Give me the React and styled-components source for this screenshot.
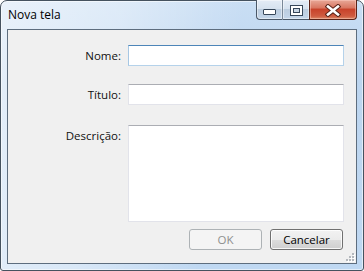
import React from 'react'
import styled, { createGlobalStyle, css } from 'styled-components'

const GlobalStyle = createGlobalStyle`
  html, body {
    margin: 0;
    padding: 0;
    background: #ffffff;
  }
  * {
    box-sizing: border-box;
  }
`

const Window = styled.div`
  width: 364px;
  height: 271px;
  display: flex;
  flex-direction: column;
  padding: 0 6px 6px;
  border: 1px solid #45525f;
  border-radius: 7px 7px 3px 3px;
  background:
    linear-gradient(100deg, rgba(255, 255, 255, 0.6) 0%, rgba(255, 255, 255, 0.4) 30%, rgba(255, 255, 255, 0) 60%),
    linear-gradient(180deg, #c9def4 0%, #bcd5ef 30%, #bfd8f2 100%);
  box-shadow: inset 0 0 0 1px rgba(255, 255, 255, 0.55);
  font-family: 'Open Sans', 'Noto Sans', sans-serif;
  font-size: 11.5px;
  color: #000;
`

const TitleBar = styled.div`
  height: 28px;
  display: flex;
  justify-content: space-between;
  align-items: flex-start;
`

const Title = styled.span`
  padding: 6px 0 0 1px;
  line-height: 16px;
  font-size: 12px;
`

const CaptionGroup = styled.div`
  display: flex;
  margin-top: -1px;
`

const CaptionButton = styled.div`
  width: ${(p) => p.$w}px;
  height: 20px;
  display: flex;
  align-items: center;
  justify-content: center;
  padding-top: 1px;
  border: 1px solid #4a5868;
  border-top: none;
  background: linear-gradient(180deg, #e4ecf6 0%, #d6e2ef 45%, #bccddf 50%, #c4d6ea 100%);
  box-shadow: inset 0 0 0 1px rgba(255, 255, 255, 0.45);
  ${(p) =>
    p.$pos === 'first' &&
    css`
      border-bottom-left-radius: 4px;
      border-right: 1px solid #7a8898;
    `}
  ${(p) =>
    p.$pos === 'middle' &&
    css`
      border-left: none;
      border-right: none;
    `}
  ${(p) =>
    p.$close &&
    css`
      border-color: #5a2318;
      border-bottom-right-radius: 4px;
      background: linear-gradient(180deg, #e8a898 0%, #d97863 40%, #c8432b 50%, #cf5b40 85%, #dc8c6a 100%);
      box-shadow: inset 0 0 0 1px rgba(255, 210, 200, 0.45);
    `}
`

const ClientArea = styled.div`
  position: relative;
  flex: 1;
  display: flex;
  flex-direction: column;
  padding: 15px 12px 0 0;
  border: 1px solid #5d6d7e;
  background: #f0f0f0;
`

const Form = styled.div`
  display: grid;
  grid-template-columns: 113px 216px;
  column-gap: 7px;
  align-items: center;
`

const Label = styled.label`
  justify-self: end;
  align-self: ${(p) => (p.$top ? 'start' : 'center')};
  padding-top: ${(p) => (p.$top ? '3px' : '0')};
  line-height: 16px;
  color: #111;
`

const Spacer = styled.div`
  grid-column: 1 / span 2;
  height: ${(p) => p.$h}px;
`

const TextInput = styled.div`
  height: 21px;
  background: #fff;
  border: 1px solid #e2e3ea;
  border-top-color: #abadb3;
  ${(p) =>
    p.$focused &&
    css`
      border-color: #b5d2ea;
      border-top-color: #4d85b8;
      border-left-color: #a6c7e4;
    `}
`

const TextArea = styled(TextInput)`
  height: 97px;
`

const ButtonRow = styled.div`
  display: flex;
  justify-content: flex-end;
  gap: 8px;
  margin-top: 7px;
  padding-right: 1px;
`

const Button = styled.div`
  width: 73px;
  height: 21px;
  display: flex;
  align-items: center;
  justify-content: center;
  border: 1px solid #707070;
  border-radius: 3px;
  background: linear-gradient(180deg, #f2f2f2 0%, #ebebeb 50%, #dddddd 51%, #cfcfcf 100%);
  box-shadow: inset 0 0 0 1px rgba(255, 255, 255, 0.8);
  color: #000;
  line-height: 16px;
  ${(p) =>
    p.$disabled &&
    css`
      border-color: #adb2b5;
      background: #f4f4f4;
      box-shadow: none;
      color: #8e8f8f;
    `}
`

const Grip = styled.svg`
  position: absolute;
  right: 1px;
  bottom: 1px;
`

function MinimizeIcon() {
  return (
    <svg width='13' height='9' viewBox='0 0 13 9'>
      <rect x='0.5' y='3.5' width='12' height='5' rx='0.5' fill='#fff' stroke='#37475a' />
    </svg>
  )
}

function MaximizeIcon() {
  return (
    <svg width='13' height='11' viewBox='0 0 13 11'>
      <rect x='0.5' y='0.5' width='12' height='10' fill='#fff' stroke='#37475a' />
      <rect x='3.5' y='3.5' width='6' height='4' fill='#c9d6e4' stroke='#37475a' />
    </svg>
  )
}

function CloseIcon() {
  return (
    <svg width='16' height='13' viewBox='0 0 16 13'>
      <path d='M3 2.5 L13 10.5 M13 2.5 L3 10.5' stroke='#5a2318' strokeWidth='4.6' strokeLinecap='square' />
      <path d='M3 2.5 L13 10.5 M13 2.5 L3 10.5' stroke='#fff' strokeWidth='2.6' strokeLinecap='square' />
    </svg>
  )
}

function SizeGrip() {
  const dots = [
    [7, 1],
    [4, 4],
    [7, 4],
    [1, 7],
    [4, 7],
    [7, 7],
  ]
  return (
    <Grip width='10' height='10' viewBox='0 0 10 10'>
      {dots.map(([x, y]) => (
        <g key={`${x}-${y}`}>
          <rect x={x + 1} y={y + 1} width='2' height='2' fill='#ffffff' />
          <rect x={x} y={y} width='2' height='2' fill='#b4b8bd' />
        </g>
      ))}
    </Grip>
  )
}

export default function App() {
  return (
    <>
      <GlobalStyle />
      <Window>
        <TitleBar>
          <Title>Nova tela</Title>
          <CaptionGroup>
            <CaptionButton $w={27} $pos='first'>
              <MinimizeIcon />
            </CaptionButton>
            <CaptionButton $w={26} $pos='middle'>
              <MaximizeIcon />
            </CaptionButton>
            <CaptionButton $w={48} $close>
              <CloseIcon />
            </CaptionButton>
          </CaptionGroup>
        </TitleBar>
        <ClientArea>
          <Form>
            <Label>Nome:</Label>
            <TextInput $focused />
            <Spacer $h={18} />
            <Label>Título:</Label>
            <TextInput />
            <Spacer $h={20} />
            <Label $top>Descrição:</Label>
            <TextArea />
          </Form>
          <ButtonRow>
            <Button $disabled>OK</Button>
            <Button>Cancelar</Button>
          </ButtonRow>
          <SizeGrip />
        </ClientArea>
      </Window>
    </>
  )
}
